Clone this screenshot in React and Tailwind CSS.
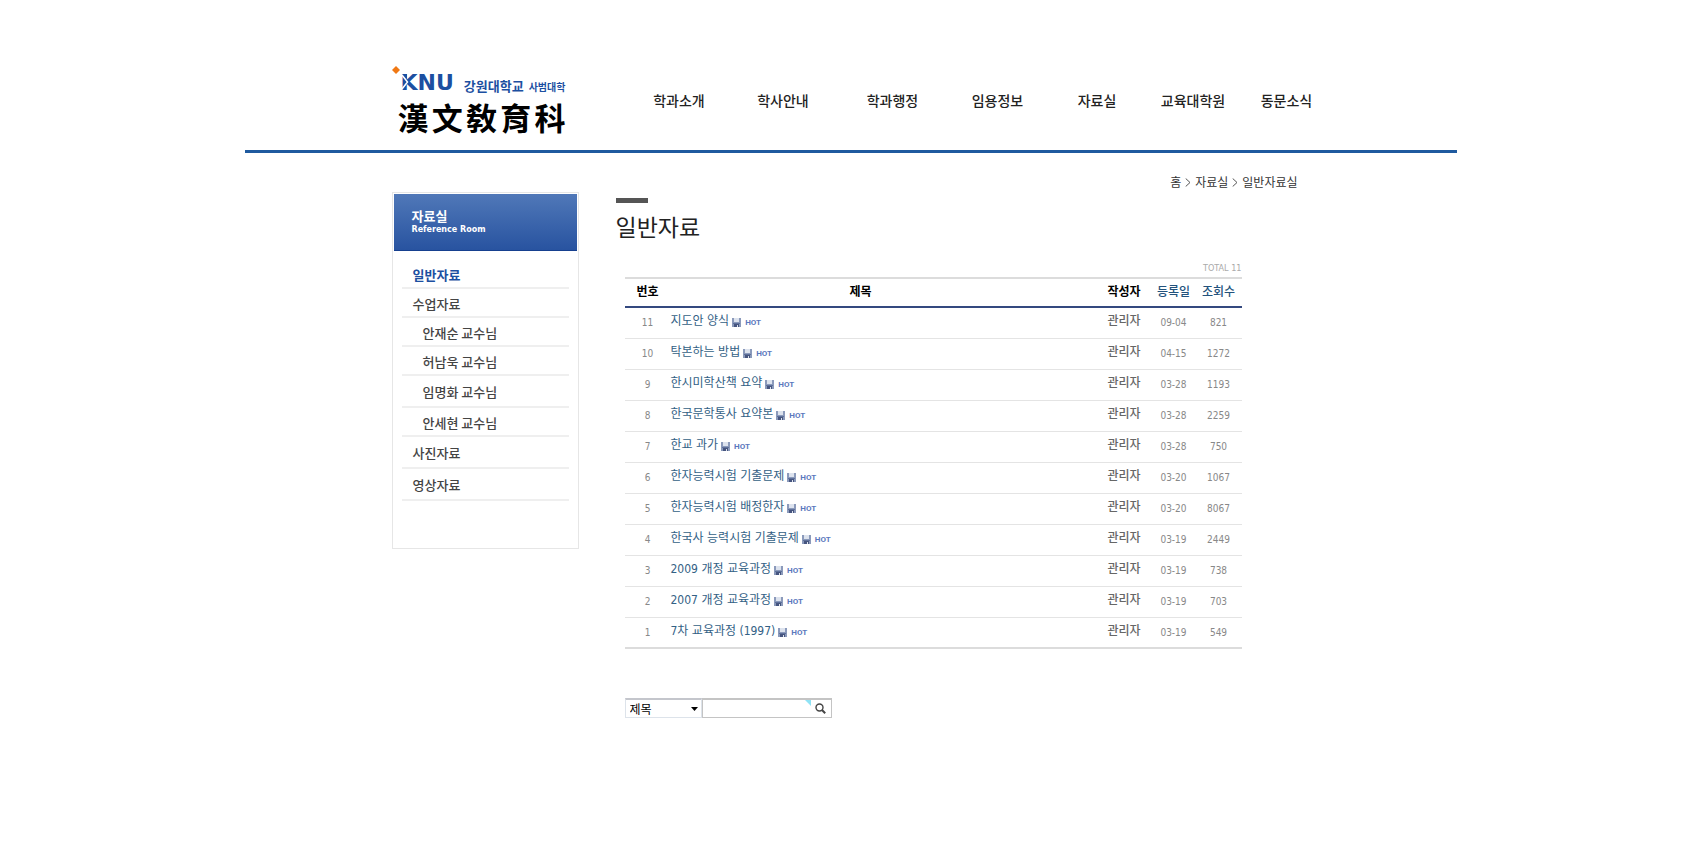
const NAV = ['학과소개', '학사안내', '학과행정', '임용정보', '자료실', '교육대학원', '동문소식'];

const SIDE_MENU = [
  { label: '일반자료', active: true },
  { label: '수업자료' },
  { label: '안재순 교수님', sub: true },
  { label: '허남욱 교수님', sub: true },
  { label: '임명화 교수님', sub: true, tall: true },
  { label: '안세현 교수님', sub: true },
  { label: '사진자료', tall: true },
  { label: '영상자료', tall: true },
];

const POSTS = [
  { no: 11, title: '지도안 양식', date: '09-04', hits: 821 },
  { no: 10, title: '탁본하는 방법', date: '04-15', hits: 1272 },
  { no: 9, title: '한시미학산책 요약', date: '03-28', hits: 1193 },
  { no: 8, title: '한국문학통사 요약본', date: '03-28', hits: 2259 },
  { no: 7, title: '한교 과가', date: '03-28', hits: 750 },
  { no: 6, title: '한자능력시험 기출문제', date: '03-20', hits: 1067 },
  { no: 5, title: '한자능력시험 배정한자', date: '03-20', hits: 8067 },
  { no: 4, title: '한국사 능력시험 기출문제', date: '03-19', hits: 2449 },
  { no: 3, title: '2009 개정 교육과정', date: '03-19', hits: 738 },
  { no: 2, title: '2007 개정 교육과정', date: '03-19', hits: 703 },
  { no: 1, title: '7차 교육과정 (1997)', date: '03-19', hits: 549 },
];

function FloppyIcon() {
  return (
    <svg className="w-[9px] h-[9px] shrink-0" viewBox="0 0 9 9" aria-hidden="true">
      <path d="M0 0h9v9H0z" fill="#8b9abb" />
      <path d="M2 0h5v4H2z" fill="#dde3ee" />
      <path d="M1 5h7v1H1z" fill="#5f719b" />
      <path d="M2 6h5v3H2z" fill="#46557f" />
      <path d="M5 7h1v2H5z" fill="#dfe4ee" />
    </svg>
  );
}

function PathArrow() {
  return (
    <svg className="w-[6px] h-[9px]" viewBox="0 0 6 9" fill="none" stroke="#555" aria-hidden="true">
      <path d="M.7.5L5 4.5.7 8.5" />
    </svg>
  );
}

function Logo() {
  return (
    <a href="#" className="block w-[178px] text-[#1c4fa1]">
      <div className="relative flex items-end h-7">
        {/* spark and the wedge cut into the K */}
        <svg className="absolute left-0 top-0 w-5 h-7" viewBox="0 0 20 28" aria-hidden="true">
          <path d="M4 0l4 4-4 4-4-4z" fill="#f07814" />
          <path d="M10 8h5v5z" fill="#1c4fa1" />
        </svg>
        <span className="pl-[9px] font-['DejaVu_Sans',sans-serif] font-bold text-[22px] leading-[22px]">KNU</span>
        <svg className="absolute left-0 top-0 w-5 h-7" viewBox="0 0 20 28" fill="none" stroke="#fff" strokeWidth="1.5" aria-hidden="true">
          <path d="M10 9l5.5 7-5.5 7" />
        </svg>
        <span className="ml-2.5 text-[13px] leading-4 font-bold whitespace-nowrap">강원대학교</span>
        <span className="ml-[5px] text-[10px] leading-[14px] font-bold whitespace-nowrap">사범대학</span>
      </div>
      <div className="mt-[7px] pl-1.5 pr-1 flex justify-between text-[31px] leading-8 text-black font-['Noto_Sans_CJK_TC',sans-serif] font-bold">
        {[...'漢文敎育科'].map((c) => (
          <span key={c}>{c}</span>
        ))}
      </div>
    </a>
  );
}

function Header() {
  return (
    <header className="h-[153px] border-b-[3px] border-[#1f5a9f] flex">
      <div className="ml-[147px] mt-[66px] shrink-0">
        <Logo />
      </div>
      <nav className="ml-[57px] mt-[90px] grid h-5 grid-cols-[105px_103px_116px_94px_105px_87px_100px] text-center text-[14px] leading-5 font-medium text-[#222]">
        {NAV.map((n) => (
          <a key={n} href="#" className="whitespace-nowrap">{n}</a>
        ))}
      </nav>
    </header>
  );
}

function Sidebar() {
  return (
    <aside className="w-[187px] h-[357px] shrink-0 border border-[#e6e6e6] p-px">
      <div className="h-[57px] px-[18px] pt-3.5 bg-linear-to-b from-[#5078b8] to-[#2853a0] border-b border-[#16408f] text-white">
        <h2 className="text-[13px] leading-4 font-bold">자료실</h2>
        <p className="mt-px font-['DejaVu_Sans',sans-serif] text-[8px] leading-[10px] font-bold">Reference Room</p>
      </div>
      <ul className="px-2 pt-[9px] text-[13px] text-[#444] font-medium">
        {SIDE_MENU.map((m) => (
          <li
            key={m.label}
            className={`border-b-2 border-[#efefef] pt-0.5 flex items-center ${m.tall ? 'h-8' : 'h-[29px]'} ${m.sub ? 'pl-[21px]' : 'pl-[11px]'}`}
          >
            <a href="#" className={m.active ? 'text-[#1c4fa1] font-bold' : ''}>{m.label}</a>
          </li>
        ))}
      </ul>
    </aside>
  );
}

function PostTable() {
  return (
    <table className="w-full table-fixed border-collapse border-t-2 border-b-2 border-[#dcdcdc] text-center">
      <colgroup>
        <col className="w-[46px]" />
        <col />
        <col className="w-[55px]" />
        <col className="w-[44px]" />
        <col className="w-[46px]" />
      </colgroup>
      <thead>
        <tr className="h-[29px] border-b-2 border-[#34497f] text-[12px] leading-4 text-black">
          <th className="pb-1">번호</th>
          <th className="pb-1 pr-[46px]">제목</th>
          <th className="pb-1">작성자</th>
          <th className="pb-1 font-medium text-[#23527c]"><a href="#">등록일</a></th>
          <th className="pb-1 font-medium text-[#23527c]"><a href="#">조회수</a></th>
        </tr>
      </thead>
      <tbody className="font-['DejaVu_Sans_Condensed','Noto_Sans_CJK_KR',sans-serif] text-[10px] text-[#888]">
        {POSTS.map((p) => (
          <tr key={p.no} className="h-[31px] border-b border-[#e4e4e4]">
            <td>{p.no}</td>
            <td className="pb-[3px] text-left">
              <div className="flex items-center">
                <a href="#" className="text-[12px] leading-4 text-[#336185]">{p.title}</a>
                <span className="ml-[3px] mt-[3px] flex items-center gap-1">
                  <FloppyIcon />
                  <span className="font-['Roboto',sans-serif] text-[8px] leading-[9px] font-bold text-[#5b78bd]">HOT</span>
                </span>
              </div>
            </td>
            <td className="pb-[3px] text-[12px] leading-4 font-medium text-[#666]">관리자</td>
            <td>{p.date}</td>
            <td>{p.hits}</td>
          </tr>
        ))}
      </tbody>
    </table>
  );
}

function SearchForm() {
  return (
    <form className="mt-[49px] flex h-5 text-[12px]" onSubmit={(e) => e.preventDefault()}>
      <div className="relative w-[77px]">
        <select aria-label="검색 대상" className="w-full h-5 appearance-none border border-t-2 border-[#dde3ea] border-t-[#c4c6cc] pl-1 leading-4 text-black bg-white">
          <option>제목</option>
        </select>
        <svg className="absolute right-1 top-[9px] w-[7px] h-1 pointer-events-none" viewBox="0 0 7 4" aria-hidden="true">
          <path d="M0 0h7L3.5 4z" fill="#000" />
        </svg>
      </div>
      <div className="relative w-[130px] h-5 flex border border-t-2 border-[#c4c4c4]">
        <input type="text" aria-label="검색어" className="min-w-0 flex-1 outline-none" />
        <svg className="absolute right-5 top-0 w-[6px] h-[6px]" viewBox="0 0 6 6" aria-hidden="true">
          <path d="M0 0h6v6z" fill="#8fe3f5" />
        </svg>
        <button type="submit" aria-label="검색" className="w-5 flex items-center justify-center">
          <svg className="w-[11px] h-[11px]" viewBox="0 0 11 11" fill="none" stroke="#444" aria-hidden="true">
            <circle cx="4.5" cy="4.5" r="3.5" strokeWidth="1.4" />
            <path d="M7 7l3.2 3.2" strokeWidth="2" />
          </svg>
        </button>
      </div>
    </form>
  );
}

export default function App() {
  return (
    <div className="min-h-screen bg-white font-['Noto_Sans_CJK_KR',sans-serif]">
      <div className="mx-auto max-w-[1212px]">
        <Header />
        <div className="flex pl-[147px]">
          <div className="pt-[39px]">
            <Sidebar />
          </div>
          <main className="ml-[37px] w-[682px]">
            <nav aria-label="위치" className="mt-[19px] flex h-5 items-center justify-end gap-1 text-[12px] text-[#333]">
              <a href="#">홈</a>
              <PathArrow />
              <a href="#">자료실</a>
              <PathArrow />
              <span>일반자료실</span>
            </nav>
            <div className="mt-1.5 w-8 h-[5px] bg-[#555]" />
            <h1 className="mt-1.5 text-[23px] leading-[34px] text-[#222]">일반자료</h1>
            <div className="ml-[9px] w-[617px]">
              <p className="mt-5 mb-1 text-right font-['DejaVu_Sans_Condensed',sans-serif] text-[9px] leading-[10px] text-[#aaa]">TOTAL 11</p>
              <PostTable />
              <SearchForm />
            </div>
          </main>
        </div>
      </div>
    </div>
  );
}
